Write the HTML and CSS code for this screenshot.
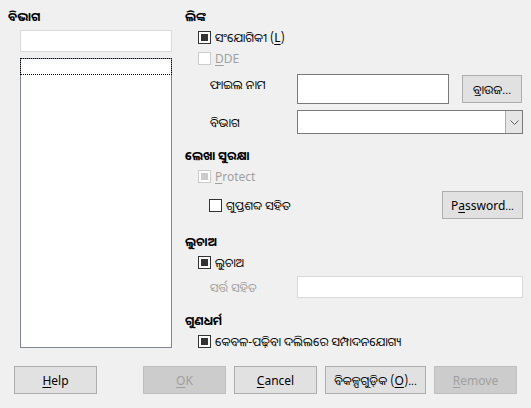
FILE: index.html
```html
<!DOCTYPE html>
<html lang="or">
<head>
<meta charset="utf-8">
<title>ବିଭାଗ</title>
<link rel="stylesheet" href="styles.css">
</head>
<body>
<div class="dialog">
  <div class="main">
    <div class="left">
      <div class="heading">ବିଭାଗ</div>
      <div class="left-body">
        <div class="entry"></div>
        <div class="listbox"><div class="focusrow"></div></div>
      </div>
    </div>
    <div class="right">
      <div class="heading">ଲିଙ୍କ</div>
      <div class="check"><span class="box checked"></span><span>ସଂଯୋଗିକୀ (<u>L</u>)</span></div>
      <div class="check disabled"><span class="box"></span><span><u>D</u>DE</span></div>
      <div class="field-row file-row">
        <span class="field-label top">ଫାଇଲ ନାମ</span>
        <div class="entry dark file-entry"></div>
        <button class="btn browse">ବ୍ରାଉଜ...</button>
      </div>
      <div class="field-row section-row">
        <span class="field-label">ବିଭାଗ</span>
        <div class="combo"><span class="combo-btn"><svg width="9" height="5" viewBox="0 0 9 5"><path d="M0.5 0.5 L4.5 4.5 L8.5 0.5" fill="none" stroke="#606060" stroke-width="1"/></svg></span></div>
      </div>

      <div class="heading h2">ଲେଖା ସୁରକ୍ଷା</div>
      <div class="check disabled"><span class="box checked"></span><span><u>P</u>rotect</span></div>
      <div class="pw-row">
        <div class="check indent2"><span class="box"></span><span>ଗୁପ୍ତଶବ୍ଦ ସହିତ</span></div>
        <button class="btn pw">P<u>a</u>ssword...</button>
      </div>

      <div class="heading h3">ଲୁଚାଅ</div>
      <div class="check"><span class="box checked"></span><span>ଲୁଚାଅ</span></div>
      <div class="field-row cond-row">
        <span class="field-label dim">ସର୍ତ୍ତ ସହିତ</span>
        <div class="entry light cond-entry"></div>
      </div>

      <div class="heading h4">ଗୁଣଧର୍ମ</div>
      <div class="check"><span class="box checked"></span><span>କେବଳ-ପଢ଼ିବା ଦଲିଲରେ ସମ୍ପାଦନଯୋଗ୍ୟ</span></div>
    </div>
  </div>
  <div class="buttons">
    <button class="btn bottom"><u>H</u>elp</button>
    <div class="spacer"></div>
    <button class="btn bottom off"><u>O</u>K</button>
    <button class="btn bottom"><u>C</u>ancel</button>
    <button class="btn bottom wide">ବିକଳ୍ପଗୁଡ଼ିକ (<u>O</u>)...</button>
    <button class="btn bottom off"><u>R</u>emove</button>
  </div>
</div>
</body>
</html>
```
FILE: styles.css
```css
html, body {
  margin: 0;
  padding: 0;
  background: #f0f0f0;
}
body {
  font-family: "Noto Sans Oriya", "Noto Sans Odia", "Lohit Odia", "Open Sans", "Noto Sans", "DejaVu Sans", sans-serif;
  font-size: 12px;
  color: #000;
  width: 531px;
  height: 408px;
  overflow: hidden;
}
u { text-decoration: underline; text-underline-offset: 2px; }

.dialog {
  display: flex;
  flex-direction: column;
  padding: 6px 0 0 0;
}
.main {
  display: flex;
  padding-left: 8px;
}
.left {
  width: 164px;
  display: flex;
  flex-direction: column;
}
.heading {
  height: 21px;
  line-height: 21px;
  font-weight: bold;
  white-space: nowrap;
}
.left-body {
  padding-left: 12px;
  display: flex;
  flex-direction: column;
}
.entry {
  box-sizing: border-box;
  background: #fff;
  border: 1px solid #d9d9d9;
}
.left .entry {
  height: 22px;
  margin-top: 3px;
}
.listbox {
  box-sizing: border-box;
  margin-top: 6px;
  height: 290px;
  background: #fff;
  border: 1px solid #828790;
}
.focusrow {
  box-sizing: border-box;
  height: 17px;
  margin: -1px -1px 0 -1px;
  border: 1px dotted #000;
}

.right {
  margin-left: 13px;
  width: 338px;
  display: flex;
  flex-direction: column;
}
.check {
  display: flex;
  align-items: center;
  height: 21px;
  padding-left: 13px;
  gap: 4px;
  white-space: nowrap;
}
.box {
  box-sizing: border-box;
  width: 13px;
  height: 13px;
  flex: none;
  border: 1px solid #333;
  background: #fff;
  position: relative;
}
.box.checked::after {
  content: "";
  position: absolute;
  left: 2px;
  top: 2px;
  width: 7px;
  height: 7px;
  background: #333;
}
.check.disabled { color: #a0a0a0; }
.check.disabled .box { border-color: #cccccc; }
.check.disabled .box.checked::after { background: #cccccc; }

.field-row {
  display: flex;
  align-items: center;
}
.field-label {
  width: 87px;
  padding-left: 25px;
  flex: none;
  white-space: nowrap;
}
.field-label.top { align-self: flex-start; padding-top: 2px; }
.field-label.dim { color: #a0a0a0; }
.file-row { margin-top: 5px; height: 30px; }
.entry.dark { border-color: #7a7a7a; }
.file-entry { width: 152px; height: 30px; }
.btn {
  box-sizing: border-box;
  font: inherit;
  color: #000;
  background: #e1e1e1;
  border: 1px solid #adadad;
  padding: 0;
  margin: 0;
  white-space: nowrap;
}
.browse {
  width: 60px;
  height: 28px;
  margin-left: 13px;
}
.section-row { margin-top: 6px; height: 24px; }
.combo {
  box-sizing: border-box;
  width: 226px;
  height: 24px;
  background: #fff;
  border: 1px solid #7a7a7a;
  display: flex;
  justify-content: flex-end;
}
.combo-btn {
  width: 17px;
  height: 22px;
  box-sizing: border-box;
  background: #e5e5e5;
  border-left: 1px solid #adadad;
  display: flex;
  align-items: center;
  justify-content: center;
}
.h2 { margin-top: 11px; }
.pw-row {
  display: flex;
  align-items: center;
  justify-content: space-between;
  margin-top: 4px;
  height: 28px;
}
.check.indent2 { padding-left: 24px; }
.pw { width: 81px; height: 28px; margin-right: 0; }
.h3 { margin-top: 12px; }
.cond-row { margin-top: 3px; height: 22px; }
.entry.light { border-color: #d9d9d9; }
.cond-entry { width: 227px; height: 22px; }
.h4 { margin-top: 12px; }

.buttons {
  display: flex;
  gap: 8px;
  padding: 0 14px;
  margin-top: 14px;
}
.spacer { flex: 1; }
.bottom { width: 83px; height: 28px; }
.bottom.wide { width: 101px; }
.bottom.off {
  background: #cccccc;
  border-color: #bfbfbf;
  color: #a0a0a0;
}
```
